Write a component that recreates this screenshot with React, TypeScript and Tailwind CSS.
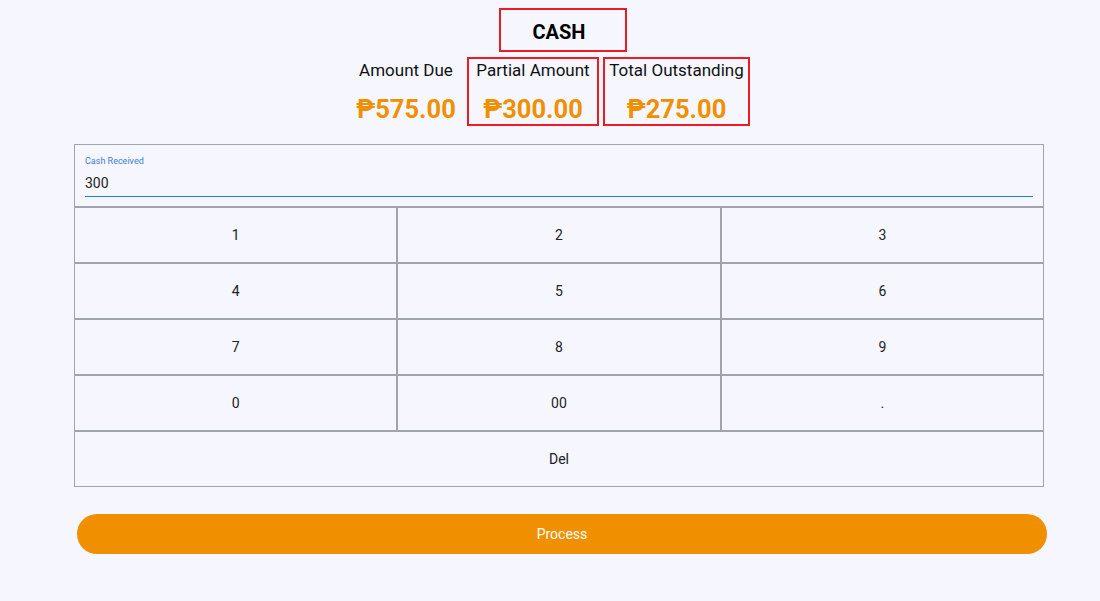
import { useState } from "react";

export default function App() {
  const [cash, setCash] = useState("300");

  const keys = ["1", "2", "3", "4", "5", "6", "7", "8", "9", "0", "00", "."];

  const handleKey = (k: string) => {
    setCash(cash + k);
  };

  return (
    <div className="w-[1100px] h-[601px] bg-[#f5f6fe] font-['Roboto',sans-serif] text-[#1a1a1a]">
      <div className="flex flex-col items-center pt-[8px]">
        <div className="ml-[26px] w-[128px] h-[44px] border-2 border-[#ed1c24] flex items-center justify-center pt-[3px] pr-[8px] text-[20px] font-bold text-black">
          CASH
        </div>
      </div>

      <div className="flex flex-row mt-[5px] pl-[355px]">
        <div className="w-[102px] h-[69px] flex flex-col items-center">
          <div className="text-[17px] leading-[20px] mt-[3px] text-[#111] whitespace-nowrap">Amount Due</div>
          <div className="text-[25.5px] leading-[28px] font-bold text-[#f08f00] mt-[15px] whitespace-nowrap">₱575.00</div>
        </div>
        <div className="ml-[10px] w-[132px] h-[69px] border-2 border-[#ed1c24] flex flex-col items-center">
          <div className="text-[17px] leading-[20px] mt-[1px] text-[#111] whitespace-nowrap">Partial Amount</div>
          <div className="text-[25.5px] leading-[28px] font-bold text-[#f08f00] mt-[15px] whitespace-nowrap">₱300.00</div>
        </div>
        <div className="ml-[4px] w-[147px] h-[69px] border-2 border-[#ed1c24] flex flex-col items-center">
          <div className="text-[17px] leading-[20px] mt-[1px] text-[#111] whitespace-nowrap">Total Outstanding</div>
          <div className="text-[25.5px] leading-[28px] font-bold text-[#f08f00] mt-[15px] whitespace-nowrap">₱275.00</div>
        </div>
      </div>

      <div className="ml-[74px] w-[970px] mt-[18px]">
        <div className="h-[63px] border border-[#a0a4ad] px-[10px] pt-[10px]">
          <div className="text-[9px] leading-[12px] text-[#3a7fd8]">Cash Received</div>
          <input
            value={cash}
            onChange={(e) => setCash(e.target.value)}
            className="w-full mt-[6px] bg-transparent outline-none text-[14px] leading-[20px] pb-[3px] text-[#222] border-b-[1.5px] border-[#1e7fd8]"
          />
        </div>
        <div className="grid grid-cols-3">
          {keys.map((k) => (
            <button
              key={k}
              onClick={() => handleKey(k)}
              className="h-[56px] border border-[#a0a4ad] flex items-center justify-center text-[14px] text-[#222]"
            >
              {k}
            </button>
          ))}
          <button
            onClick={() => setCash(cash.slice(0, -1))}
            className="col-span-3 h-[56px] border border-[#a0a4ad] flex items-center justify-center text-[14px] text-[#222]"
          >
            Del
          </button>
        </div>
      </div>

      <div className="ml-[77px] w-[970px] mt-[27px]">
        <button className="w-full h-[40px] rounded-full bg-[#f08f00] text-white text-[14px]">
          Process
        </button>
      </div>
    </div>
  );
}
